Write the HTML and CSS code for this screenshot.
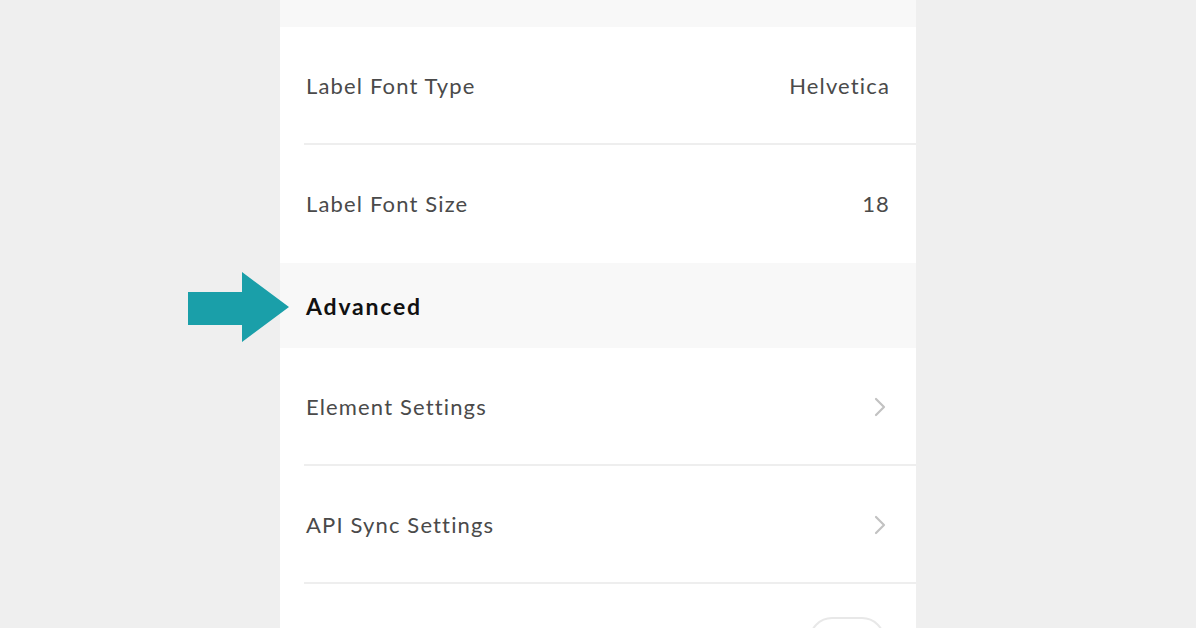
FILE: index.html
```html
<!DOCTYPE html>
<html lang="en">
<head>
<meta charset="utf-8">
<title>Settings</title>
<link rel="stylesheet" href="styles.css">
</head>
<body>
<div class="panel">
  <div class="section-top"></div>
  <div class="row"><span class="label">Label Font Type</span><span class="value">Helvetica</span></div>
  <div class="row last"><span class="label">Label Font Size</span><span class="value">18</span></div>
  <div class="section-head">
    <svg class="arrow" width="104" height="72" viewBox="0 0 104 72"><polygon points="0,20 54,20 54,0 101,35 54,70 54,53 0,53" fill="#1a9fa9"/></svg>
    <span class="head-label">Advanced</span>
  </div>
  <div class="row"><span class="label">Element Settings</span><svg class="chev" width="14" height="22" viewBox="0 0 14 22"><polyline points="3,3 11,11 3,19" fill="none" stroke="#c2c2c2" stroke-width="2.2" stroke-linecap="round" stroke-linejoin="round"/></svg></div>
  <div class="row"><span class="label">API Sync Settings</span><svg class="chev" width="14" height="22" viewBox="0 0 14 22"><polyline points="3,3 11,11 3,19" fill="none" stroke="#c2c2c2" stroke-width="2.2" stroke-linecap="round" stroke-linejoin="round"/></svg></div>
  <div class="row toggle-row"><span class="toggle"></span></div>
</div>
</body>
</html>
```
FILE: styles.css
```css
html, body {
  margin: 0;
  padding: 0;
  height: 100%;
  overflow: hidden;
}
body {
  background: #efefef;
  font-family: Lato, "Open Sans", sans-serif;
}
.panel {
  width: 636px;
  margin: 0 auto;
  background: #ffffff;
  min-height: 100%;
}
.section-top {
  height: 27px;
  background: #f8f8f8;
}
.row {
  position: relative;
  height: 118px;
  display: flex;
  align-items: center;
  justify-content: space-between;
  padding: 0 27px 0 26px;
  box-sizing: border-box;
  border-bottom: 1px solid transparent;
}
.row::after {
  content: "";
  position: absolute;
  left: 24px;
  right: 0;
  bottom: -1px;
  height: 2px;
  background: #eeeeee;
}
.row.last::after { display: none; }
.label,
.value {
  font-size: 22px;
  color: #4a4a4a;
  letter-spacing: 1.15px;
}
.value {
  margin-right: -1px;
}
.section-head {
  position: relative;
  height: 85px;
  background: #f8f8f8;
  display: flex;
  align-items: center;
  padding-left: 26px;
}
.head-label {
  font-size: 23px;
  font-weight: 700;
  color: #111;
  letter-spacing: 1.8px;
}
.arrow {
  position: absolute;
  left: -92px;
  top: 9px;
}
.chev {
  margin-right: 2px;
}
.toggle-row {
  align-items: flex-start;
}
.toggle-row::after { display: none; }
.toggle {
  display: block;
  margin-top: 33px;
  margin-left: auto;
  width: 76px;
  height: 46px;
  border-radius: 23px;
  border: 2px solid #e8e8e8;
  box-sizing: border-box;
  margin-right: 4px;
}
```
